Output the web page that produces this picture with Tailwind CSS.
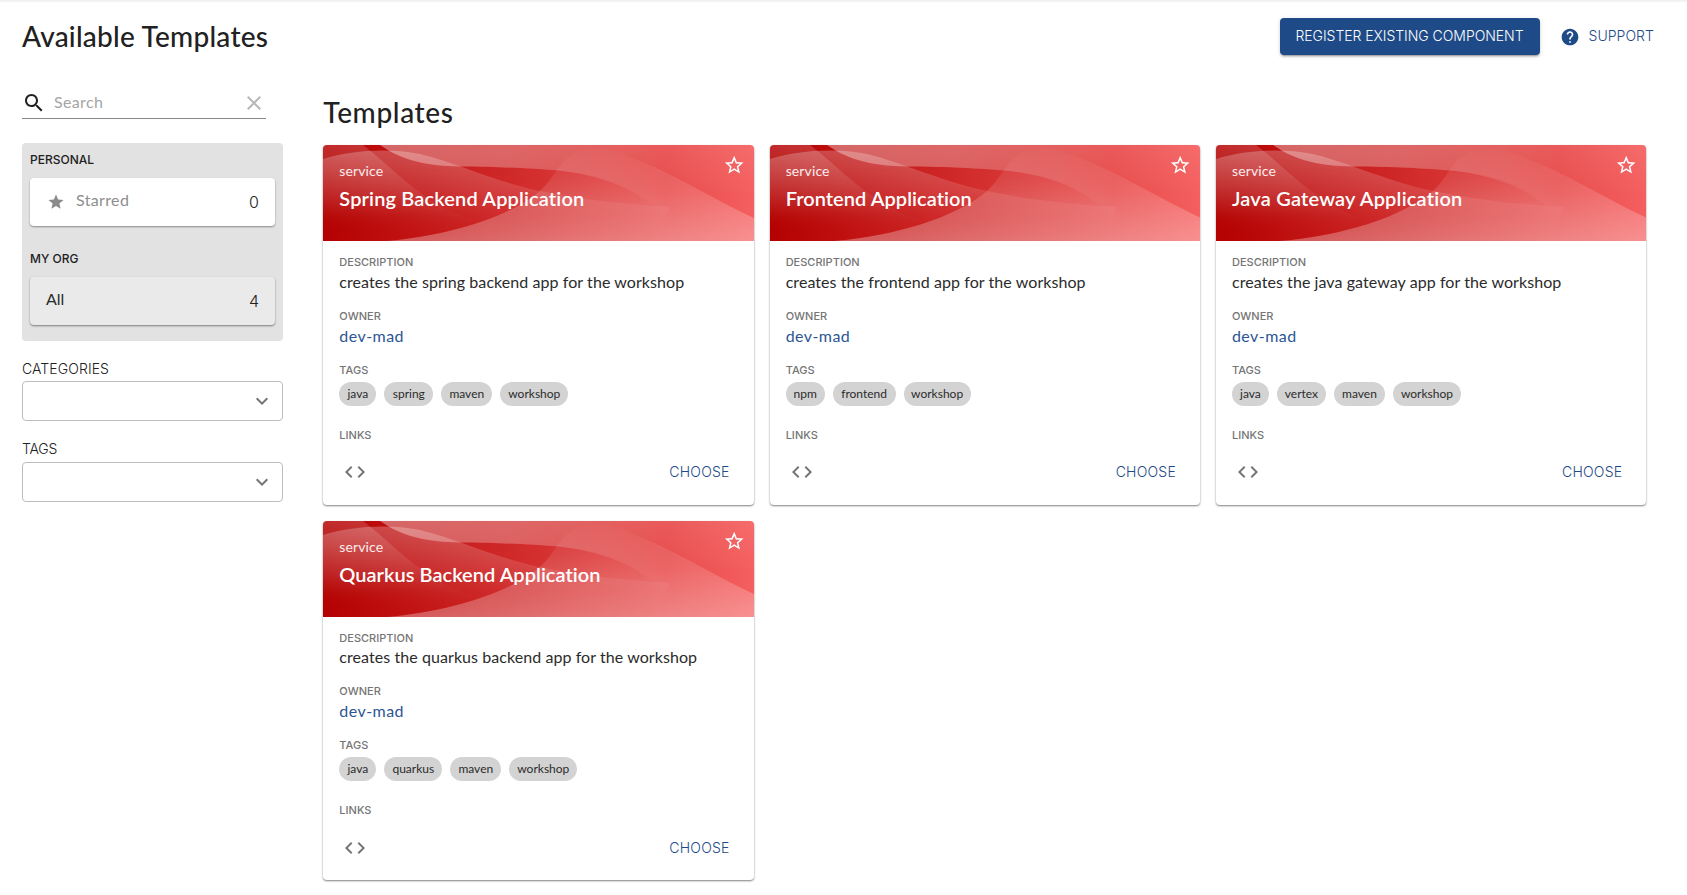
<!DOCTYPE html>
<html lang="en">
<head>
<meta charset="utf-8">
<title>Available Templates</title>
<script src="https://cdn.jsdelivr.net/npm/@tailwindcss/browser@4"></script>
</head>
<body class="min-h-screen bg-white font-[Lato,sans-serif] text-[#212121] overflow-hidden">

<!-- Shared artwork -->
<svg class="absolute size-0" aria-hidden="true">
  <defs>
    <linearGradient id="base" gradientUnits="userSpaceOnUse" x1="0" y1="0" x2="431" y2="0"><stop offset="0" stop-color="#b40000"/><stop offset="1" stop-color="#f55f5f"/></linearGradient>
    <linearGradient id="ga" gradientUnits="userSpaceOnUse" x1="60" y1="0" x2="345" y2="0"><stop offset="0" stop-color="#fff" stop-opacity=".32"/><stop offset=".45" stop-color="#fff" stop-opacity=".23"/><stop offset=".8" stop-color="#fff" stop-opacity=".1"/><stop offset="1" stop-color="#fff" stop-opacity="0"/></linearGradient>
    <linearGradient id="top" gradientUnits="userSpaceOnUse" x1="0" y1="0" x2="0" y2="50"><stop offset="0" stop-color="#fff" stop-opacity=".08"/><stop offset="1" stop-color="#fff" stop-opacity="0"/></linearGradient>
    <linearGradient id="gb" gradientUnits="userSpaceOnUse" x1="0" y1="0" x2="0" y2="78"><stop offset="0" stop-color="#fff" stop-opacity=".17"/><stop offset="1" stop-color="#fff" stop-opacity="0"/></linearGradient>
    <linearGradient id="gc" gradientUnits="userSpaceOnUse" x1="0" y1="5" x2="0" y2="88"><stop offset="0" stop-color="#fff" stop-opacity=".25"/><stop offset=".8" stop-color="#fff" stop-opacity=".02"/><stop offset="1" stop-color="#fff" stop-opacity="0"/></linearGradient>
    <linearGradient id="gd" gradientUnits="userSpaceOnUse" x1="0" y1="0" x2="0" y2="96"><stop offset="0" stop-color="#fff" stop-opacity="0"/><stop offset=".4" stop-color="#fff" stop-opacity=".11"/><stop offset="1" stop-color="#fff" stop-opacity=".31"/></linearGradient>
  </defs>
  <symbol id="wave" viewBox="0 0 431 96" preserveAspectRatio="none">
    <path fill="url(#base)" d="M0 0h431v96H0z"/>
    <path fill="url(#gb)" d="M0 0H40C63 17 83 40 113 58C150 80 196 92 250 96H0z"/>
    <path fill="url(#gc)" d="M0 14C30 5 65 3 97 9C140 20 170 36 217 46C260 55 300 59 347 62L335 96H0z"/>
    <path fill="url(#ga)" d="M57 0C80 16 105 21 137 21.500C180 22 205 23 240 26C285 32 315 46 335 65L345 72V0z"/>
    <path fill="url(#top)" d="M57 0C80 16 105 21 137 21.500C180 22 205 23 240 26C275 30 300 37 320 50H431V0z"/>
    <path fill="url(#gd)" d="M64 96C125 91 187 72 217 46C236 28 234 15 258 5Q272 -1 288 5C345 24 380 49 431 73V96z"/>
  </symbol>
  <symbol id="starline" viewBox="0 0 24 24"><path fill="currentColor" d="M22 9.24l-7.190-.62L12 2 9.190 8.630 2 9.240l5.460 4.730L5.820 21 12 17.270 18.180 21l-1.630-7.030L22 9.240zM12 15.400l-3.760 2.270 1-4.280-3.320-2.880 4.380-.38L12 6.100l1.710 4.040 4.380.38-3.320 2.880 1 4.280L12 15.400z"/></symbol>
  <symbol id="code" viewBox="0 0 24 24"><path fill="currentColor" d="M9.400 16.600L4.800 12l4.600-4.600L8 6l-6 6 6 6 1.400-1.400zm5.200 0l4.600-4.600-4.600-4.600L16 6l6 6-6 6-1.400-1.400z"/></symbol>
  <symbol id="chevron" viewBox="0 0 24 24"><path fill="currentColor" d="M7.410 8.590L12 13.170l4.590-4.580L18 10l-6 6-6-6z"/></symbol>
</svg>

<div class="h-[3px] bg-linear-to-b from-black/7 to-transparent"></div>

<header class="flex h-[71px] items-start justify-between pl-[22px] pr-[33px]">
  <h1 class="mt-[15px] text-[28px] leading-9 font-medium tracking-[0.24px]">Available Templates</h1>
  <div class="mt-[15px] flex items-center font-[Inter,sans-serif] text-sm font-light">
    <button class="h-[37px] w-[260px] rounded bg-[#1e4b88] pb-px text-center whitespace-nowrap tracking-[-0.04px] text-white shadow-[0_3px_1px_-2px_rgba(0,0,0,0.2),0_2px_2px_0_rgba(0,0,0,0.14),0_1px_5px_0_rgba(0,0,0,0.12)]">REGISTER EXISTING COMPONENT</button>
    <a class="ml-5 flex items-center gap-[9px] tracking-[0.05px] text-[#1e4b88]">
      <svg class="size-5" viewBox="0 0 24 24" fill="currentColor"><path d="M12 2C6.480 2 2 6.480 2 12s4.480 10 10 10 10-4.480 10-10S17.520 2 12 2zm1 17h-2v-2h2v2zm2.070-7.750l-.9.920C13.450 12.900 13 13.500 13 15h-2v-.5c0-1.100.45-2.100 1.170-2.830l1.240-1.260c.37-.36.590-.86.590-1.410 0-1.100-.9-2-2-2s-2 .9-2 2H8c0-2.210 1.790-4 4-4s4 1.790 4 4c0 .88-.36 1.680-.93 2.250z"/></svg>
      <span class="pb-px">SUPPORT</span>
    </a>
  </div>
</header>

<main class="flex pl-[22px]">
  <aside class="w-[261px] shrink-0">
    <div class="mt-3 flex h-[33px] w-[244px] items-center border-b border-[#8a8a8a] pt-px">
      <svg class="size-6 shrink-0" viewBox="0 0 24 24" fill="currentColor"><path d="M15.500 14h-.79l-.28-.27C15.410 12.590 16 11.110 16 9.500 16 5.910 13.090 3 9.500 3S3 5.910 3 9.500 5.910 16 9.500 16c1.610 0 3.090-.59 4.230-1.570l.27.28v.79l5 4.990L20.490 19l-4.990-5zm-6 0C7.010 14 5 11.990 5 9.500S7.010 5 9.500 5 14 7.010 14 9.500 11.990 14 9.500 14z"/></svg>
      <span class="ml-2 flex-1 pb-px text-base tracking-[0.35px] text-[#a5a5a5]">Search</span>
      <svg class="size-6" viewBox="0 0 24 24" fill="#b8b8b8"><path d="M19 6.410L17.590 5 12 10.590 6.410 5 5 6.410 10.590 12 5 17.590 6.410 19 12 13.410 17.590 19 19 17.590 13.410 12z"/></svg>
    </div>

    <section class="mt-6 h-[198px] rounded bg-[#e2e2e2] px-2 pt-2">
      <h2 class="font-[Inter,sans-serif] text-xs leading-[18px] font-medium">PERSONAL</h2>
      <div class="mt-[9px] flex h-12 items-center rounded bg-white px-4 shadow-[0_1px_2px_rgba(0,0,0,0.4)]">
        <svg class="ml-px size-[18px]" viewBox="0 0 24 24" fill="#8b8b8b"><path d="M12 17.270L18.180 21l-1.640-7.030L22 9.240l-7.190-.61L12 2 9.190 8.630 2 9.240l5.460 4.730L5.820 21z"/></svg>
        <span class="ml-[11px] flex-1 pb-1 text-base tracking-[0.35px] text-[#8e8e8e]">Starred</span>
        <span class="font-[Inter,sans-serif] text-base font-light">0</span>
      </div>
      <h2 class="mt-6 font-[Inter,sans-serif] text-xs leading-[18px] font-medium">MY ORG</h2>
      <div class="mt-[9px] flex h-12 items-center rounded bg-[#eaeaea] px-4 shadow-[0_1px_2px_rgba(0,0,0,0.45)]">
        <span class="flex-1 pb-1 text-base text-[#2b2b2b]">All</span>
        <span class="font-[Inter,sans-serif] text-base font-light">4</span>
      </div>
    </section>

    <div class="mt-[19px] font-[Inter,sans-serif] text-sm leading-[18px] font-light tracking-[0.08px]">CATEGORIES</div>
    <div class="mt-[3px] flex h-10 items-center justify-end rounded border border-[#bdbdbd] pr-2"><svg class="size-6 text-[#757575]"><use href="#chevron"/></svg></div>
    <div class="mt-[19px] font-[Inter,sans-serif] text-sm leading-[18px] font-light tracking-[-0.2px]">TAGS</div>
    <div class="mt-1 flex h-10 items-center justify-end rounded border border-[#bdbdbd] pr-2"><svg class="size-6 text-[#757575]"><use href="#chevron"/></svg></div>
  </aside>

  <section class="ml-[40.3px] w-[1323px] shrink-0">
    <h2 class="mt-[18px] text-[28px] leading-10 font-medium tracking-[0.65px]">Templates</h2>
    <div id="grid" class="mt-[13.2px] grid grid-cols-3 gap-4"></div>
  </section>
</main>

<script>
const templates = [
  { title: 'Spring Backend Application', ls: .14, desc: 'creates the spring backend app for the workshop', tags: [['java', 37], ['spring', 49], ['maven', 51], ['workshop', 68]] },
  { title: 'Frontend Application', ls: .05, desc: 'creates the frontend app for the workshop', tags: [['npm', 39], ['frontend', 63], ['workshop', 67]] },
  { title: 'Java Gateway Application', ls: .2, desc: 'creates the java gateway app for the workshop', tags: [['java', 37], ['vertex', 49], ['maven', 51], ['workshop', 68]] },
  { title: 'Quarkus Backend Application', ls: .03, desc: 'creates the quarkus backend app for the workshop', tags: [['java', 37], ['quarkus', 58], ['maven', 51], ['workshop', 68]] },
];
const label = (text, spacing) => `<div class="font-[Inter,sans-serif] text-[11px] leading-3 font-medium tracking-[0.02px] text-[#757575] ${spacing}">${text}</div>`;
document.getElementById('grid').innerHTML = templates.map(t => `
  <article class="h-[359.5px] overflow-hidden rounded bg-white shadow-[0_1px_2px_rgba(0,0,0,0.5)]">
    <div class="relative h-24 pt-4 pl-4 text-white">
      <svg class="absolute inset-0 h-full w-[431px]"><use href="#wave"/></svg>
      <svg class="absolute top-[9px] right-[8.5px] size-[22.4px]"><use href="#starline"/></svg>
      <div class="relative text-sm leading-5 tracking-[0.13px] text-white/90">service</div>
      <h3 class="relative mt-[3px] text-xl leading-7 font-semibold" style="letter-spacing:${t.ls}px">${t.title}</h3>
    </div>
    <div class="pt-[15px] pl-4">
      ${label('DESCRIPTION', '')}
      <p class="mt-[1.5px] text-base leading-6 tracking-[0.07px] text-[#2b2b2b]">${t.desc}</p>
      ${label('OWNER', 'mt-[16.2px]')}
      <a class="mt-[1.8px] block text-base leading-6 tracking-[0.45px] text-[#2b5693]">dev-mad</a>
      ${label('TAGS', 'mt-[16.2px]')}
      <div class="mt-1.5 flex gap-2">${t.tags.map(([name, w]) => `<span class="h-6 rounded-full bg-[#d3d3d3] text-center text-xs leading-[23px] text-[#2b2b2b]" style="width:${w}px">${name}</span>`).join('')}</div>
      ${label('LINKS', 'mt-[23px]')}
      <div class="mt-[19.4px] flex items-center justify-between pr-6 pl-1">
        <svg class="size-6 text-[#757575]"><use href="#code"/></svg>
        <a class="font-[Inter,sans-serif] text-sm leading-6 font-light tracking-[0.22px] text-[#1e4b88]">CHOOSE</a>
      </div>
    </div>
  </article>`).join('');
</script>
</body>
</html>
